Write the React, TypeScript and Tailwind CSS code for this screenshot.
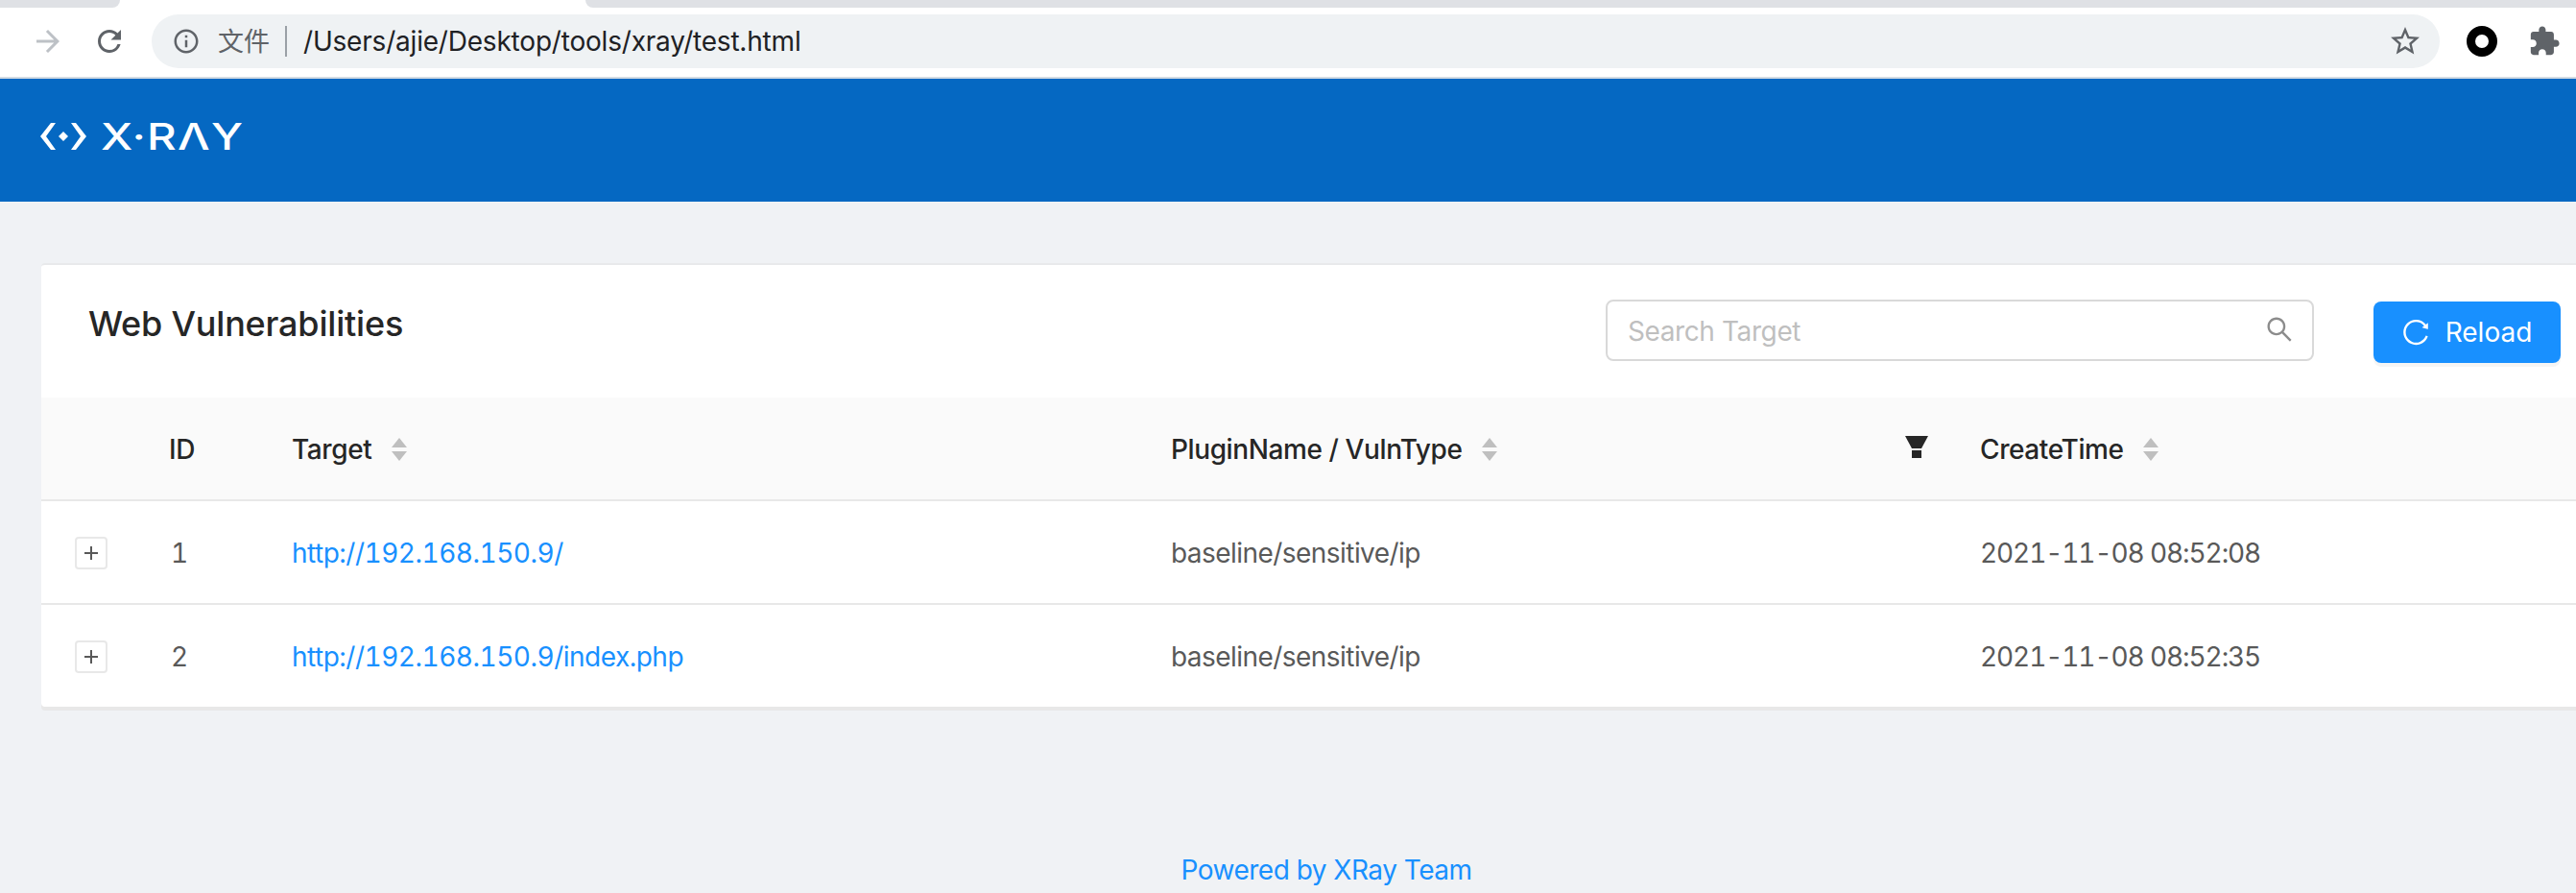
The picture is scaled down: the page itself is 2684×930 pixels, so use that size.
import React from 'react';

const SortIcon = () => (
  <svg width="16" height="24" viewBox="0 0 16 24" className="shrink-0" fill="#bfbfbf">
    <path d="M8 0l8 10H0z" />
    <path d="M0 14h16l-8 10z" />
  </svg>
);

const FilterIcon = () => (
  <svg width="24" height="24" viewBox="0 0 24 24" className="shrink-0" fill="#262626">
    <path d="M0 0h24l-7 13H7z" />
    <rect x="7" y="15" width="10" height="8" />
  </svg>
);

const Toolbar = () => (
  <div className="h-[74px] bg-white border-b-2 border-[#d3dbe3] flex items-center pb-[2px]">
    <svg width="36" height="36" viewBox="0 0 24 24" fill="#bdc1c6" className="ml-[32px] shrink-0">
      <path d="M12 4l-1.41 1.41L16.17 11H4v2h12.17l-5.58 5.59L12 20l8-8z" />
    </svg>
    <svg width="36" height="36" viewBox="0 0 24 24" fill="#5f6368" className="ml-[28px] shrink-0">
      <path d="M17.65 6.35A7.958 7.958 0 0012 4c-4.42 0-7.99 3.58-7.99 8s3.57 8 7.99 8c3.73 0 6.84-2.55 7.73-6h-2.08A5.99 5.99 0 0112 18c-3.31 0-6-2.69-6-6s2.69-6 6-6c1.66 0 3.14.69 4.22 1.78L13 11h7V4l-2.35 2.35z" />
    </svg>
    <div className="ml-[26px] w-[2384px] h-[56px] rounded-full bg-[#eff2f4] flex items-center shrink-0">
      <svg width="30" height="30" viewBox="0 0 24 24" fill="#5f6368" className="ml-[21px] shrink-0">
        <path d="M11 7h2v2h-2zm0 4h2v6h-2zm1-9C6.48 2 2 6.48 2 12s4.48 10 10 10 10-4.48 10-10S17.52 2 12 2zm0 18c-4.41 0-8-3.59-8-8s3.59-8 8-8 8 3.59 8 8-3.59 8-8 8z" />
      </svg>
      <span className="ml-[18px] text-[27px] leading-none text-[#5f6368]">文件</span>
      <span className="ml-[16px] w-[2px] h-[32px] bg-[#9aa0a6]" />
      <span className="ml-[17px] text-[28px] leading-none text-[#202124] tracking-[-0.2px]">/Users/ajie/Desktop/tools/xray/test.html</span>
      <svg width="36" height="36" viewBox="0 0 24 24" fill="#5f6368" className="ml-auto mr-[18px] shrink-0">
        <path d="M22 9.24l-7.19-.62L12 2 9.19 8.63 2 9.24l5.46 4.73L5.82 21 12 17.27 18.18 21l-1.63-7.03L22 9.24zM12 15.4l-3.76 2.27 1-4.28-3.32-2.88 4.38-.38L12 6.1l1.71 4.04 4.38.38-3.32 2.88 1 4.28L12 15.4z" />
      </svg>
    </div>
    <span className="ml-[28px] w-[32px] h-[32px] rounded-full border-[9px] border-black shrink-0" />
    <svg width="34" height="34" viewBox="0 0 24 24" fill="#5f6368" className="ml-[32px] shrink-0">
      <path d="M20.5 11H19V7c0-1.1-.9-2-2-2h-4V3.5C13 2.12 11.88 1 10.5 1S8 2.12 8 3.5V5H4c-1.1 0-1.99.9-1.99 2v3.8H3.5c1.49 0 2.7 1.21 2.7 2.7s-1.21 2.7-2.7 2.7H2V20c0 1.1.9 2 2 2h3.8v-1.5c0-1.49 1.21-2.7 2.7-2.7 1.49 0 2.7 1.21 2.7 2.7V22H17c1.1 0 2-.9 2-2v-4h1.5c1.38 0 2.5-1.12 2.5-2.5S21.88 11 20.5 11z" />
    </svg>
  </div>
);

const Logo = () => (
  <div className="flex items-center h-[128px] pl-[42px] pb-[8px]">
    <svg width="48" height="28" viewBox="0 0 48 28" fill="#fff" className="shrink-0">
      <path d="M11 0h5L6 14l10 14h-5L0 14z" />
      <path d="M32 0h5l11 14-11 14h-5l10-14z" />
      <path d="M24 9l5 5-5 5-5-5z" />
    </svg>
    <span aria-label="X-RAY" className="ml-[15px] inline-block origin-left scale-x-[1.25] text-[38px] leading-none font-medium text-white tracking-[1px] whitespace-nowrap">
      X·RΛY
    </span>
  </div>
);

const rows = [
  { id: 1, target: 'http://192.168.150.9/', plugin: 'baseline/sensitive/ip', time: '2021-11-08 08:52:08' },
  { id: 2, target: 'http://192.168.150.9/index.php', plugin: 'baseline/sensitive/ip', time: '2021-11-08 08:52:35' },
];

const gridCols = 'grid grid-cols-[133px_128px_916px_843px_1fr] items-center';

export default function App() {
  return (
    <div className="h-[930px] w-[2684px] overflow-hidden bg-[#f0f2f5] font-['Inter','Noto_Sans_CJK_SC',sans-serif]">
      <div className="h-2 bg-white flex justify-between">
        <div className="w-[125px] bg-[#dfe1e5] rounded-br-[12px]" />
        <div className="w-[2074px] bg-[#dfe1e5] rounded-bl-[12px]" />
      </div>
      <Toolbar />
      <div className="bg-[#0568c2]">
        <Logo />
      </div>

      <div className="pt-[64px] pl-[43px]">
        <div className="bg-white rounded-l-[4px] border-t-2 border-[#e8e9eb] shadow-[0_4px_0_#e8e8e8]">
          <div className="h-[138px] flex items-start">
            <h1 className="ml-[49px] mt-[37px] text-[36px] leading-[48px] font-medium text-[#262626] tracking-[-0.2px]">Web Vulnerabilities</h1>
            <div className="ml-auto mt-[36px] flex items-start">
              <div className="w-[738px] h-[64px] border-2 border-[#d9d9d9] rounded-[8px] flex items-center justify-between pl-[21px] pr-[20px]">
                <span className="text-[28px] text-[#bfbfbf] tracking-[-0.4px] pt-[2px]">Search Target</span>
                <svg width="28" height="28" viewBox="64 64 896 896" fill="#8c8c8c" className="shrink-0 -mt-[2px]">
                  <path d="M909.6 854.5L649.9 594.8C690.2 542.7 712 479 712 412c0-80.2-31.3-155.4-87.9-212.1-56.6-56.7-132-87.9-212.1-87.9s-155.5 31.3-212.1 87.9C143.2 256.5 112 331.8 112 412c0 80.1 31.3 155.5 87.9 212.1C256.5 680.8 331.8 712 412 712c67 0 130.6-21.8 182.7-62l259.7 259.6a8.2 8.2 0 0011.6 0l43.6-43.5a8.2 8.2 0 000-11.6zM570.4 570.4C528 612.7 471.8 636 412 636s-116-23.3-158.4-65.6C211.3 528 188 471.8 188 412s23.3-116.1 65.6-158.4C296 211.3 352.2 188 412 188s116.1 23.2 158.4 65.6S636 352.2 636 412s-23.3 116.1-65.6 158.4z" />
                </svg>
              </div>
              <button className="ml-[62px] mr-[16px] mt-[2px] w-[195px] h-[64px] rounded-[8px] bg-[#1890ff] text-white text-[28px] flex items-center justify-center gap-[17px] shadow-[0_4px_0_rgba(0,0,0,0.04)]">
                <svg width="28" height="28" viewBox="64 64 896 896" fill="#fff" className="shrink-0">
                  <path d="M909.1 209.3l-56.4 44.1C775.8 155.1 656.2 92 521.9 92 290 92 102.3 279.5 102 511.5 101.7 743.7 289.8 932 521.9 932c181.3 0 335.8-115 394.6-276.1 1.5-4.2-.7-8.9-4.9-10.3l-56.7-19.5a8 8 0 00-10.1 4.8c-1.8 5-3.8 10-5.9 14.9-17.3 41-42.1 77.8-73.7 109.4A344.77 344.77 0 01655.9 829c-42.3 17.9-87.4 27-133.8 27-46.5 0-91.5-9.1-133.8-27A341.5 341.5 0 01279 755.2a342.16 342.16 0 01-73.7-109.4c-17.9-42.4-27-87.4-27-133.9s9.1-91.5 27-133.9c17.3-41 42.1-77.8 73.7-109.4 31.6-31.6 68.4-56.4 109.3-73.8 42.3-17.9 87.4-27 133.8-27 46.5 0 91.5 9.1 133.8 27a341.5 341.5 0 01109.3 73.8c9.9 9.9 19.2 20.4 27.8 31.4l-60.2 47a8 8 0 003 14.1l175.6 43c5 1.2 9.9-2.6 9.9-7.7l.8-180.9c-.1-6.6-7.8-10.3-13-6.2z" />
                </svg>
                Reload
              </button>
            </div>
          </div>

          <div className={`${gridCols} h-[108px] bg-[#fafafa] border-b-2 border-[#e8e8e8] text-[28px] font-medium text-[#262626] tracking-[-0.4px] pt-[1px]`}>
            <span />
            <span>ID</span>
            <span className="flex items-center gap-[21px]">Target <SortIcon /></span>
            <span className="flex items-center justify-between pr-[54px]">
              <span className="flex items-center gap-[21px]">PluginName / VulnType <SortIcon /></span>
              <span className="-mt-[4px]"><FilterIcon /></span>
            </span>
            <span className="flex items-center gap-[20px]">CreateTime <SortIcon /></span>
          </div>

          {rows.map((row, i) => (
            <div key={row.id} className={`${gridCols} text-[28px] text-[#595959] tabular-nums ${i === 0 ? 'h-[108px] border-b-2 border-[#e8e8e8] pt-[1px]' : 'h-[106px] pt-[2px]'}`}>
              <span className="ml-[35px] w-[34px] h-[34px] border-2 border-[#e8e8e8] rounded-[4px] flex items-center justify-center">
                <svg width="14" height="14" viewBox="0 0 14 14" fill="#595959">
                  <rect x="6" y="0" width="2" height="14" />
                  <rect x="0" y="6" width="14" height="2" />
                </svg>
              </span>
              <span className="pl-[2px]">{row.id}</span>
              <a className="text-[#1890ff] tracking-[-0.5px]">{row.target}</a>
              <span className="tracking-[-0.55px]">{row.plugin}</span>
              <span className="tracking-[-1.1px]">{row.time}</span>
            </div>
          ))}
        </div>

        <div className="mt-[150px] pl-[37px] flex justify-center">
          <a className="text-[28px] leading-[40px] text-[#1890ff] tracking-[-0.5px]">Powered by XRay Team</a>
        </div>
      </div>
    </div>
  );
}
